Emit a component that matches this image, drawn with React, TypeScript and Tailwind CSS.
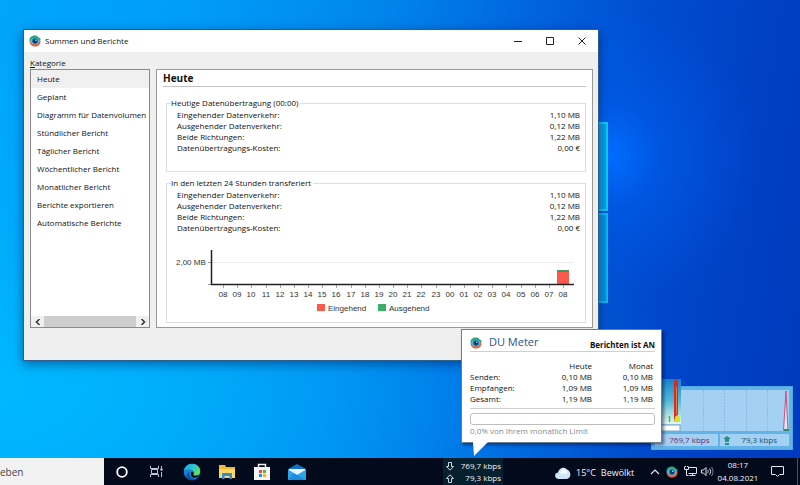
import { useState } from "react"

const categories = [
  "Heute",
  "Geplant",
  "Diagramm für Datenvolumen",
  "Stündlicher Bericht",
  "Täglicher Bericht",
  "Wöchentlicher Bericht",
  "Monatlicher Bericht",
  "Berichte exportieren",
  "Automatische Berichte",
]

const totals = [
  ["Eingehender Datenverkehr:", "1,10 MB"],
  ["Ausgehender Datenverkehr:", "0,12 MB"],
  ["Beide Richtungen:", "1,22 MB"],
  ["Datenübertragungs-Kosten:", "0,00 €"],
]

const usage = [
  ["Senden:", "0,10 MB", "0,10 MB"],
  ["Empfangen:", "1,09 MB", "1,09 MB"],
  ["Gesamt:", "1,19 MB", "1,19 MB"],
]

const hours = Array.from({ length: 25 }, (_, i) => String((i + 8) % 24).padStart(2, "0"))

function EyeLogo({ className }: { className: string }) {
  return (
    <svg viewBox="0 0 24 24" className={className} aria-hidden="true">
      <path d="M12 1C6 1 1 4 1 10c0 3 2 5 4 6l14-1c3-2 4-4 4-7 0-3-4-2-5-4s-3-3-6-3z" fill="#27a577" />
      <path d="M1 12c0 7 5 11 11 11s11-4 11-10c0-2-2-3-3-3l-4 7-9 1z" fill="#e8603c" />
      <path d="M2 12c3-6 7-7 10-7s7 2 9 6c-2 5-5 8-9 8s-8-2-10-7z" fill="#45c4d6" />
      <circle cx="12" cy="12" r="5.5" fill="#12549e" />
      <circle cx="12" cy="12" r="3" fill="#06204e" />
      <circle cx="13.5" cy="10.5" r="1.5" fill="#d8f6ff" />
    </svg>
  )
}

function TotalsTable() {
  return (
    <table className="ml-1.5 w-[calc(100%-6px)] leading-[11px]">
      <tbody>
        {totals.map(([label, value]) => (
          <tr key={label}>
            <th scope="row" className="p-0 text-left font-normal">{label}</th>
            <td className="p-0 pr-px text-right">{value}</td>
          </tr>
        ))}
      </tbody>
    </table>
  )
}

function HoursChart() {
  return (
    <svg viewBox="0 0 410 72" className="mt-[11px] block w-full font-['Liberation_Sans',sans-serif] text-[8px]">
      <path d="M41 18.5H403" stroke="#ececec" />
      <path d="M37 18.5h3M37 40.5h3" stroke="#999" />
      {hours.map((_, i) => (
        <path key={i} d={`M${Math.round(52 + i * 14.17)}.5 41v3`} stroke="#aaa" />
      ))}
      <rect x="386" y="26" width="12" height="14" fill="#fa5a4b" />
      <rect x="386" y="26" width="12" height="2" fill="#3c9a5f" />
      <path d="M40.5 6v34.5H403" fill="none" stroke="#222" strokeWidth="1.5" />
      <text x="5" y="21" fill="#333">2,00 MB</text>
      {hours.map((h, i) => (
        <text key={i} x={Math.round(52 + i * 14.17)} y="53" textAnchor="middle" fill="#333">{h}</text>
      ))}
      <rect x="146" y="60" width="8" height="7" fill="#fa5a4b" />
      <text x="157" y="67" fill="#333">Eingehend</text>
      <rect x="207" y="60" width="8" height="7" fill="#3aae68" />
      <text x="218" y="67" fill="#333">Ausgehend</text>
    </svg>
  )
}

function ReportWindow() {
  const [selected, setSelected] = useState("Heute")

  return (
    <main className="absolute left-[23px] top-[29px] w-[72%] border border-[#2c5f8c] bg-[#efefef] shadow-[0_3px_10px_rgba(0,20,80,0.5)]">
      <header className="flex h-[22px] items-center bg-white pl-[5px]">
        <EyeLogo className="mr-1 size-3" />
        <h1>Summen und Berichte</h1>
        <div className="ml-auto flex">
          <button aria-label="Minimieren" className="flex h-[22px] w-8 items-center justify-center">
            <svg viewBox="0 0 8 8" className="size-2" stroke="#222"><path d="M0 4.5h8" /></svg>
          </button>
          <button aria-label="Maximieren" className="flex h-[22px] w-8 items-center justify-center">
            <svg viewBox="0 0 8 8" className="size-2" stroke="#222" fill="none"><path d="M.5.5h7v7h-7z" /></svg>
          </button>
          <button aria-label="Schließen" className="flex h-[22px] w-8 items-center justify-center">
            <svg viewBox="0 0 8 8" className="size-2" stroke="#222"><path d="M.5.5l7 7M7.5.5l-7 7" /></svg>
          </button>
        </div>
      </header>

      <div className="pb-8 pl-1.5 pr-[5px] pt-[5px]">
        <h2 id="kategorie" className="leading-[12px]"><u>K</u>ategorie</h2>
        <div className="flex gap-1.5">
          <nav aria-labelledby="kategorie" className="flex w-[120px] shrink-0 flex-col overflow-hidden border border-[#8a8a8a] bg-white">
            {categories.map((name) => (
              <button
                key={name}
                onClick={() => setSelected(name)}
                className={`h-[18px] whitespace-nowrap pl-1.5 text-left ${name === selected ? "bg-[#f0f0f0]" : ""}`}
              >
                {name}
              </button>
            ))}
            <div className="mt-auto flex h-[11px] items-stretch bg-[#f0f0f0]">
              <button aria-label="Nach links" className="flex w-[13px] items-center justify-center">
                <svg viewBox="0 0 6 6" className="size-1.5" stroke="#333" strokeWidth="1.5" fill="none"><path d="M4.5 0l-3 3 3 3" /></svg>
              </button>
              <div className="flex-1 bg-[#cdcdcd]" />
              <button aria-label="Nach rechts" className="flex w-[13px] items-center justify-center">
                <svg viewBox="0 0 6 6" className="size-1.5" stroke="#333" strokeWidth="1.5" fill="none"><path d="M1.5 0l3 3-3 3" /></svg>
              </button>
            </div>
          </nav>

          <section className="min-w-0 flex-1 border border-[#999] bg-white px-1.5 pb-1">
            <h2 className="border-b border-[#c4c4c4] text-[10px] font-bold leading-[16px]">Heute</h2>
            <fieldset className="ml-[3px] mt-2.5 border border-[#dedede] px-1 pb-[18px]">
              <legend className="pr-0.5 leading-[12px]">Heutige Datenübertragung (00:00)</legend>
              <TotalsTable />
            </fieldset>
            <fieldset className="ml-[3px] mt-[5px] border border-[#dedede] px-1 pb-1.5">
              <legend className="pr-0.5 leading-[12px]">In den letzten 24 Stunden transferiert</legend>
              <TotalsTable />
              <HoursChart />
            </fieldset>
          </section>
        </div>
      </div>
    </main>
  )
}

function SpeedWidget() {
  return (
    <aside className="absolute bottom-2 right-[7px] w-[142px] border border-[#52a9e2] bg-[#62b4e8] p-[3px]">
      <svg viewBox="0 0 134 41" className="block w-full bg-[#a4d0f3]">
        <path d="M48.5 0v41M69.5 0v41M91.5 0v41M112.5 0v41" stroke="#8dbbe2" strokeDasharray="2 1" />
        <path d="M128.5 40.5L131 1l2 39.5z" fill="#dfe6f6" stroke="#c4517c" />
        <path d="M129 40h5" stroke="#2b8a78" strokeWidth="2" />
        <path d="M0 35h25v6H0z" fill="#fff" stroke="#7ba7bd" />
      </svg>
      <div className="mt-[3px] flex gap-0.5 leading-[12px]">
        <div className="flex-1 bg-[#a4d0f3] pr-2 text-right text-[#6d2a6c]">769,7 kbps</div>
        <div className="flex flex-1 items-center bg-[#a4d0f3] pl-[3px] pr-3 text-[#17546b]">
          <svg viewBox="0 0 8 9" className="h-[9px] w-2" fill="#259184"><path d="M4 0l4 3H6v3H2V3H0zM2 7h4v2H2z" /></svg>
          <span className="ml-auto">79,3 kbps</span>
        </div>
      </div>
      <div className="absolute bottom-[25px] left-0 h-[45px] w-[29px] bg-linear-to-b from-[#1482c8] via-[#53bbd6] to-[#e4f8ee]">
        <svg viewBox="0 0 29 45" className="size-full">
          <path d="M17.5 37v6" stroke="#35c04b" strokeWidth="1.5" />
          <path d="M22 43V3l1-3h2l1 3v34z" fill="#d82a2a" />
          <path d="M24.5 8v27" stroke="#e8793a" />
          <path d="M22 43l1-5 2-2 3 2v5z" fill="#d6e324" />
        </svg>
      </div>
    </aside>
  )
}

function MeterPopup() {
  return (
    <section className="absolute bottom-[15px] right-[138px] w-[201px] border border-[#6f7f90] bg-white pb-[5px] pl-2 pr-1.5 pt-1 shadow-[2px_2px_3px_rgba(0,10,50,0.5)]">
      <header className="flex h-[18px] items-center border-b border-[#cfcfcf]">
        <EyeLogo className="mr-[7px] size-3" />
        <h2 className="text-[11px] text-[#2b568c]">DU Meter</h2>
        <strong className="ml-auto mt-1">Berichten ist AN</strong>
      </header>
      <table className="mt-2 w-full leading-[11px]">
        <thead>
          <tr>
            <td className="p-0" />
            <th scope="col" className="p-0 text-right font-normal">Heute</th>
            <th scope="col" className="w-[63px] p-0 pr-0.5 text-right font-normal">Monat</th>
          </tr>
        </thead>
        <tbody>
          {usage.map(([label, today, month]) => (
            <tr key={label}>
              <th scope="row" className="p-0 text-left font-normal">{label}</th>
              <td className="p-0 text-right">{today}</td>
              <td className="p-0 pr-0.5 text-right">{month}</td>
            </tr>
          ))}
        </tbody>
      </table>
      <div role="progressbar" aria-label="Monatliches Limit" aria-valuenow={0} className="mt-1 border-t border-[#cfcfcf] pt-1">
        <div className="h-3 rounded-[3px] border border-[#bdbdbd]" />
      </div>
      <p className="leading-[12px] text-[#8a8a8a]">0,0% von Ihrem monatlich Limit</p>
      <svg viewBox="0 0 16 14" className="absolute left-[11px] top-full h-3.5 w-4 fill-white"><path d="M0 0h15L1 14z" /></svg>
    </section>
  )
}

function Taskbar() {
  return (
    <footer className="flex h-[27px] shrink-0 items-stretch bg-[#020a1c] text-[#f1f3f6]">
      <input
        type="search"
        aria-label="Suche"
        placeholder="eben"
        className="w-[104px] shrink-0 bg-[#f2f2f2] pt-0.5 text-[10px] text-[#444] outline-none placeholder:text-[#444]"
      />
      <button aria-label="Cortana" className="flex w-[35px] items-center justify-center">
        <svg viewBox="0 0 12 12" className="size-3" fill="none" stroke="#fff" strokeWidth="1.8"><circle cx="6" cy="6" r="4.8" /></svg>
      </button>
      <button aria-label="Aktive Anwendungen" className="flex w-[35px] items-center justify-center">
        <svg viewBox="0 0 13 11" className="h-[11px] w-[13px]" fill="none" stroke="#c3c8ce">
          <path d="M.5 0v2.500h8V0M1.500 3.500h6v4h-6zM.5 11V8.500h8V11M11.500 0v2M11.500 6v5" />
          <path d="M10.500 3.500h2" stroke="#fff" strokeWidth="2" />
        </svg>
      </button>
      <button aria-label="Microsoft Edge" className="flex w-[35px] items-center justify-center">
        <svg viewBox="0 0 24 24" className="size-[18px]">
          <defs>
            <linearGradient id="edgeTop" x1="0" y1="0" x2="1" y2="0.6">
              <stop offset="0" stopColor="#1f9fe8" />
              <stop offset="0.5" stopColor="#27c3d2" />
              <stop offset="1" stopColor="#62e05a" />
            </linearGradient>
          </defs>
          <circle cx="12" cy="12" r="11" fill="#1583d8" />
          <path d="M1 11C2 5 6.5 1 12 1c6.500 0 11 4.500 11 9.500 0 4-3 6-6 6-2.500 0-3.500-1-3-2 1.500-2 .5-5.500-4-6C6 8.200 2.500 9 1 11z" fill="url(#edgeTop)" />
          <path d="M8.500 12c-1 5 3 10 9 9.600-3 2-8 1.900-11-.6-3-3-2-8 2-9z" fill="#0d4fa3" />
          <path d="M14 14.500c-1 1 .5 2.500 3 2.500 2 0 3.500-.5 5-1.500-1 3-4.500 4.500-7.500 4-3-.6-5-4-3.500-7 1-1.500 4-.5 3 2z" fill="#020a1c" />
        </svg>
      </button>
      <button aria-label="Explorer" className="flex w-[35px] items-center justify-center">
        <svg viewBox="0 0 16 14" className="h-3.5 w-4">
          <path d="M0 0h6l1 2h9v11H0z" fill="#f4b92e" />
          <path d="M0 4h16v9H0z" fill="#fcd767" />
          <path d="M3 14V8h10v6h-2.5v-3h-5v3z" fill="#2f8fd6" />
        </svg>
      </button>
      <button aria-label="Microsoft Store" className="flex w-[35px] items-center justify-center">
        <svg viewBox="0 0 18 18" className="size-[18px]">
          <path d="M5.5 5V1.500h7V5" fill="none" stroke="#f2f2f2" strokeWidth="1.5" />
          <path d="M1 4h16v13H1z" fill="#f5f5f5" />
          <path d="M6 7h3v3H6z" fill="#e8502e" />
          <path d="M10 7h3v3h-3z" fill="#6fae2c" />
          <path d="M6 11h3v3H6z" fill="#2190d8" />
          <path d="M10 11h3v3h-3z" fill="#f2b21c" />
        </svg>
      </button>
      <button aria-label="Mail" className="flex w-[35px] items-center justify-center">
        <svg viewBox="0 0 18 16" className="h-4 w-[18px]">
          <path d="M0 5l9-5 9 5v11H0z" fill="#1272c4" />
          <path d="M1 5h16v5l-8 3-8-3z" fill="#eaf4fc" />
          <path d="M0 5.5l9 5.500 9-5.500V16H0z" fill="#2ba4ea" />
          <path d="M18 16L6 9.200 0 16z" fill="#1b8be0" />
        </svg>
      </button>

      <div className="ml-auto mr-[52px] w-[60px] bg-[#06202f] pr-0.5 pt-0.5 leading-[12px]">
        <div className="flex items-center justify-between pl-[3px]">
          <svg viewBox="0 0 8 9" className="h-[9px] w-2" fill="none" stroke="#cfd6dc"><path d="M2.5.5h3v4h2L4 8.200.5 4.500h2z" /></svg>
          769,7 kbps
        </div>
        <div className="flex items-center justify-between pl-[3px]">
          <svg viewBox="0 0 8 9" className="h-[9px] w-2" fill="none" stroke="#cfd6dc"><path d="M2.5 8.500h3v-4h2L4 .8.500 4.500h2z" /></svg>
          79,3 kbps
        </div>
      </div>

      <button className="flex w-[94px] items-center gap-[5px] pt-0.5 text-[9px]">
        <svg viewBox="0 0 16 12" className="h-3 w-4">
          <path d="M4 12c-5 0-5-6-1-6.500C4 1 9-1 12 2.500c4 1 5 8.500 0 9.500z" fill="#cfe6f8" />
          <path d="M5 6c1-4 5-5 7-2s-3 4-7 2z" fill="#f2f9ff" />
        </svg>
        <span>15°C</span>
        <span>Bewölkt</span>
      </button>
      <button aria-label="Ausgeblendete Symbole" className="flex w-3 items-center justify-center">
        <svg viewBox="0 0 10 6" className="h-1.5 w-2.5" fill="none" stroke="#e5e8ec" strokeWidth="1.2"><path d="M1 5l4-4 4 4" /></svg>
      </button>
      <button aria-label="DU Meter" className="ml-1 flex w-3.5 items-center justify-center">
        <EyeLogo className="size-3" />
      </button>
      <button aria-label="Netzwerk" className="ml-1 flex w-3.5 items-center justify-center">
        <svg viewBox="0 0 13 11" className="h-[11px] w-[13px]" fill="none" stroke="#dfe3e8">
          <path d="M4.5 1.500h8v6h-8M8.500 7.500v2M5.500 9.500h6M.5.5v3h4v-3M2.500 3.500v6h2M1.500 0v1M3.500 0v1" />
        </svg>
      </button>
      <button aria-label="Lautstärke" className="ml-[3px] flex w-3.5 items-center justify-center">
        <svg viewBox="0 0 14 11" className="h-[11px] w-3.5" fill="none" stroke="#dfe3e8">
          <path d="M1.5 4v3h2L6 9.500v-8L3.500 4zM7.500 4c1 1 1 2 0 3M9.500 2.500c1.500 2 1.500 4 0 6" />
          <path d="M11.5 1c2 3 2 6 0 9" stroke="#8d949d" />
        </svg>
      </button>
      <time dateTime="2021-08-04T08:17" className="ml-0.5 w-11 text-center leading-[13px]">
        08:17
        <br />
        04.08.2021
      </time>
      <button aria-label="Benachrichtigungen" className="flex w-[34px] items-center justify-center">
        <svg viewBox="0 0 13 13" className="size-[13px]" fill="none" stroke="#e5e8ec"><path d="M.5 1.500h12v8h-4l-2 2-2-2h-4z" /></svg>
      </button>
      <button aria-label="Desktop anzeigen" className="ml-[3px] w-[3px] border-l border-[#4a5262]" />
    </footer>
  )
}

export default function App() {
  return (
    <div className="flex h-screen flex-col overflow-hidden font-['Open_Sans','Noto_Sans',sans-serif] text-[8px] text-[#111]">
      <div className="relative flex-1 overflow-hidden bg-[radial-gradient(circle_at_76%_34%,#006dff_0%,rgba(0,95,240,0.5)_8%,rgba(0,80,220,0)_22%),linear-gradient(98deg,#00a6fb_0%,#009df8_22%,#0086ec_44%,#0064df_62%,#004ccf_76%,#0040c4_90%,#003abb_100%)]">
        <div className="absolute inset-0 bg-[radial-gradient(ellipse_at_0%_85%,rgba(0,190,255,0.8)_0%,rgba(0,180,255,0.4)_30%,rgba(0,160,255,0)_60%)]" />
        <div className="absolute left-[74%] top-[122px] h-[89px] w-4 border-2 border-[#08cdf5] bg-[#0a9fdf]" />
        <div className="absolute left-[74%] top-[213px] h-[90px] w-4 border-2 border-[#08bdf0] bg-[#0792dd]" />
        <ReportWindow />
        <SpeedWidget />
        <MeterPopup />
      </div>
      <Taskbar />
    </div>
  )
}
